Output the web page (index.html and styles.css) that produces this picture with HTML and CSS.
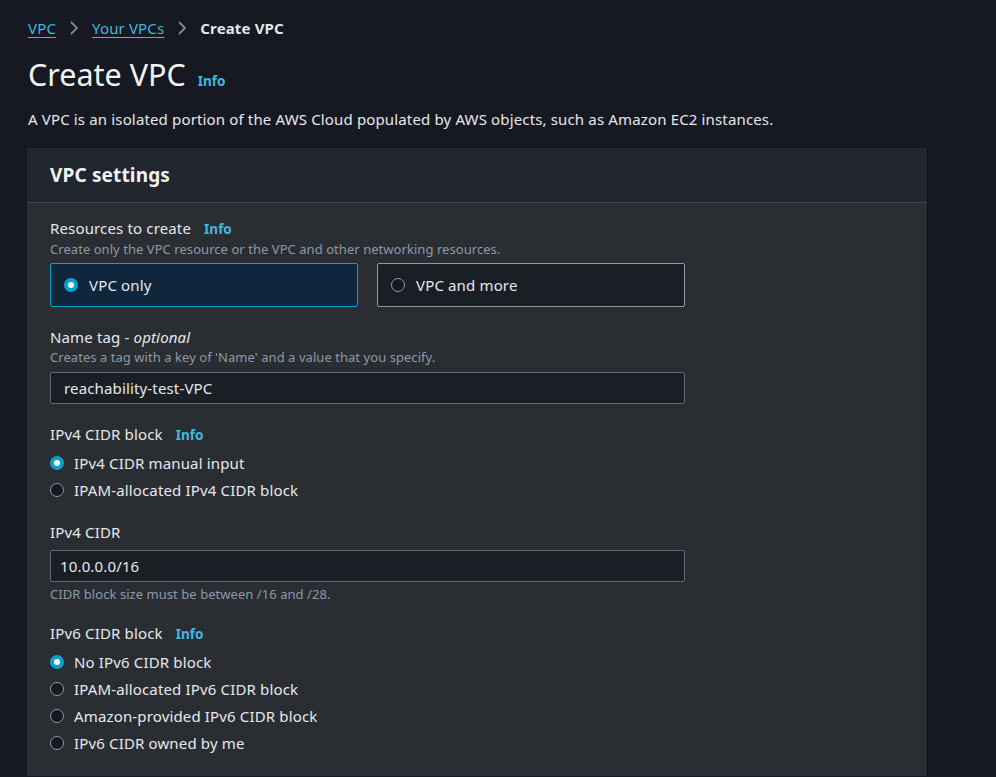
FILE: index.html
```html
<!DOCTYPE html>
<html lang="en">
<head>
<meta charset="utf-8">
<title>Create VPC</title>
<link rel="stylesheet" href="styles.css">
</head>
<body>
<main class="page">
  <nav class="crumbs">
    <a class="crumb-link" href="#">VPC</a>
    <svg class="chev" viewBox="0 0 12 16" width="12" height="16"><path d="M3 2 L9 8 L3 14" fill="none" stroke="#7d8998" stroke-width="1.8"/></svg>
    <a class="crumb-link" href="#">Your VPCs</a>
    <svg class="chev" viewBox="0 0 12 16" width="12" height="16"><path d="M3 2 L9 8 L3 14" fill="none" stroke="#7d8998" stroke-width="1.8"/></svg>
    <span class="crumb-current">Create VPC</span>
  </nav>
  <h1 class="title">Create VPC <a class="info info-title" href="#">Info</a></h1>
  <p class="intro">A VPC is an isolated portion of the AWS Cloud populated by AWS objects, such as Amazon EC2 instances.</p>

  <section class="card">
    <header class="card-head">
      <h2 class="card-title">VPC settings</h2>
    </header>
    <div class="card-body">
      <div class="field">
        <div class="label">Resources to create <a class="info" href="#">Info</a></div>
        <div class="desc">Create only the VPC resource or the VPC and other networking resources.</div>
        <div class="tiles">
          <div class="tile tile-on"><span class="radio radio-on"></span><span>VPC only</span></div>
          <div class="tile"><span class="radio"></span><span>VPC and more</span></div>
        </div>
      </div>

      <div class="field">
        <div class="label">Name tag - <i>optional</i></div>
        <div class="desc">Creates a tag with a key of 'Name' and a value that you specify.</div>
        <div class="input">reachability-test-VPC</div>
      </div>

      <div class="field">
        <div class="label">IPv4 CIDR block <a class="info" href="#">Info</a></div>
        <div class="radios">
          <div class="opt"><span class="radio radio-on"></span>IPv4 CIDR manual input</div>
          <div class="opt"><span class="radio"></span>IPAM-allocated IPv4 CIDR block</div>
        </div>
      </div>

      <div class="field field-cidr">
        <div class="label label-plain">IPv4 CIDR</div>
        <div class="input input-cidr">10.0.0.0/16</div>
        <div class="hint">CIDR block size must be between /16 and /28.</div>
      </div>

      <div class="field">
        <div class="label">IPv6 CIDR block <a class="info" href="#">Info</a></div>
        <div class="radios">
          <div class="opt"><span class="radio radio-on"></span>No IPv6 CIDR block</div>
          <div class="opt"><span class="radio"></span>IPAM-allocated IPv6 CIDR block</div>
          <div class="opt"><span class="radio"></span>Amazon-provided IPv6 CIDR block</div>
          <div class="opt"><span class="radio"></span>IPv6 CIDR owned by me</div>
        </div>
      </div>
    </div>
  </section>
</main>
</body>
</html>
```

FILE: styles.css
```css
* { box-sizing: border-box; }
html, body {
  margin: 0;
  padding: 0;
  background: #161922;
  color: #d1d5db;
  font-family: "Noto Sans", "Open Sans", sans-serif;
  font-size: 15px;
  letter-spacing: 0.15px;
}
.page {
  padding: 16px 0 0 28px;
  width: 927px;
}
a { text-decoration: none; }
.crumbs {
  display: flex;
  align-items: center;
  gap: 12px;
  height: 24px;
  line-height: 20px;
}
.crumb-link {
  color: #42b8dd;
  text-decoration: underline;
  text-underline-offset: 3px;
}
.chev { display: block; }
.crumb-current {
  color: #e3e6ea;
  font-weight: 700;
}
.title {
  margin: 14px 0 0 0;
  font-size: 30.5px;
  font-weight: 400;
  letter-spacing: 0;
  line-height: 40px;
  color: #f2f3f4;
  display: flex;
  align-items: baseline;
  gap: 12px;
}
.info {
  color: #42b8dd;
  font-weight: 700;
  font-size: 13.5px;
  letter-spacing: 0;
  margin-left: 9px;
}
.info-title { margin-left: 0; }
.intro {
  margin: 8px 0 0 0;
  line-height: 20px;
  color: #e6e8eb;
}
.card {
  margin: 19px 0 0 -1px;
  background: #2a2e33;
  box-shadow: 1px 1px 1px rgba(0,0,0,0.35);
}
.card-head {
  background: #22262e;
  height: 55px;
  border-bottom: 1px solid #414750;
  display: flex;
  align-items: center;
  padding: 0 23px;
}
.card-title {
  margin: 0;
  font-size: 19px;
  font-weight: 700;
  color: #f2f3f4;
  line-height: 24px;
}
.card-body {
  padding: 14px 23px 20px 23px;
  display: flex;
  flex-direction: column;
  gap: 19px;
}
.field {
  display: flex;
  flex-direction: column;
}
.field-cidr { margin-top: -1px; }
.label {
  line-height: 22px;
  color: #e6e8eb;
}
.label i { font-style: italic; }
.desc, .hint {
  font-size: 13px;
  letter-spacing: 0.05px;
  line-height: 18px;
  color: #8d99a8;
}
.hint { margin-top: 3px; }
.tiles {
  margin-top: 5px;
  display: flex;
  gap: 19px;
}
.tile {
  width: 308px;
  height: 44px;
  border: 1px solid #8d99a8;
  border-radius: 2px;
  background: #1a1f26;
  display: flex;
  align-items: center;
  padding-left: 13px;
  gap: 11px;
  color: #e6e8eb;
}
.tile-on {
  background: #0f263c;
  border-color: #0aa0cc;
}
.radio {
  width: 14px;
  height: 14px;
  border-radius: 50%;
  border: 1.5px solid #8d99a8;
  background: #161a20;
  flex: none;
  display: inline-block;
}
.radio-on {
  border: 4px solid #0aa0cc;
  background: #ffffff;
}
.input {
  margin-top: 6px;
  width: 635px;
  height: 32px;
  border: 1px solid #5f6b7a;
  border-radius: 2px;
  background: #1a1f26;
  display: flex;
  align-items: center;
  padding-left: 13px;
  color: #e6e8eb;
}
.input-cidr { margin-top: 7px; padding-left: 9px; }
.radios {
  margin-top: 3px;
  display: flex;
  flex-direction: column;
}
.opt {
  display: flex;
  align-items: center;
  gap: 10px;
  height: 27px;
  color: #e6e8eb;
}
```
